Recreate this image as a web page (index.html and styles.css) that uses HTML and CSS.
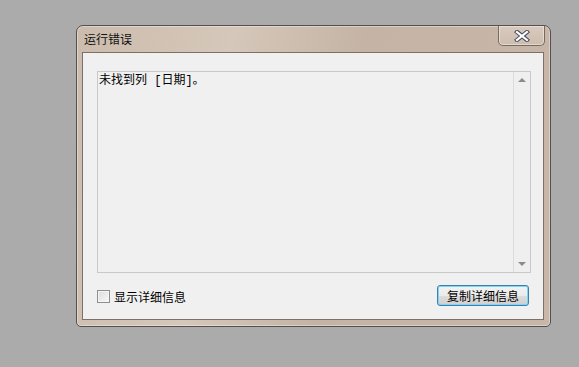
FILE: index.html
```html
<!DOCTYPE html>
<html lang="zh-CN">
<head>
    <meta charset="UTF-8">
    <title>运行错误</title>
    <link rel="stylesheet" href="styles.css">
</head>
<body>
    <div class="window">
        <div class="titlebar">
            <span class="title">运行错误</span>
            <div class="close-btn">
                <svg width="16" height="12" viewBox="0 0 16 12">
                    <path d="M3 2 L13 10 M13 2 L3 10" stroke="#4a4f60" stroke-width="4.2" stroke-linecap="square"/>
                    <path d="M3 2 L13 10 M13 2 L3 10" stroke="#fff" stroke-width="2.2" stroke-linecap="square"/>
                </svg>
            </div>
        </div>

        <div class="client">
            <!-- 错误信息 -->
            <div class="message-box">
                <div class="message-text">未找到列 [日期]。</div>
                <div class="scrollbar">
                    <span class="arrow up"></span>
                    <span class="arrow down"></span>
                </div>
            </div>

            <div class="footer">
                <label class="check">
                    <span class="check-box"></span>
                    显示详细信息
                </label>
                <button class="copy-btn">复制详细信息</button>
            </div>
        </div>
    </div>
</body>
</html>
```

FILE: styles.css
```css
body {
    margin: 0;
    padding: 25px 0 0 76px;
    background-color: #ababab;
    font-family: "Noto Sans CJK SC", "Liberation Sans", sans-serif;
    font-size: 12px;
    color: #000;
}
.window {
    width: 475px;
    height: 302px;
    box-sizing: border-box;
    border: 1px solid #55504b;
    border-radius: 7px 7px 5px 5px;
    background: linear-gradient(100deg, #ccbcad 0%, #d5c7b9 30%, #c5b4a5 55%, #c8b7a8 100%);
    box-shadow: inset 0 0 0 1px rgba(255,255,255,0.35);
    padding: 0 6px 6px 5px;
    display: flex;
    flex-direction: column;
}
.titlebar {
    height: 26px;
    display: flex;
    justify-content: space-between;
    align-items: flex-start;
}
.title {
    line-height: 26px;
    padding-left: 2px;
    color: #111;
}
.close-btn {
    width: 45px;
    height: 19px;
    margin-right: -1px;
    border: 1px solid #746b63;
    border-top: none;
    border-radius: 0 0 5px 5px;
    background: linear-gradient(#d8cabd, #cdbdaf);
    box-shadow: inset 0 0 0 1px rgba(255,255,255,0.4);
    display: flex;
    align-items: center;
    justify-content: center;
}
.client {
    flex: 1;
    border: 1px solid #7a716a;
    background-color: #f0f0f0;
    padding: 18px 12px 12px 14px;
    display: flex;
    flex-direction: column;
}
.message-box {
    height: 202px;
    box-sizing: border-box;
    border: 1px solid #c9c9c9;
    background-color: #f0f0f0;
    display: flex;
}
.message-text {
    flex: 1;
    padding: 1px 1px;
    line-height: 16px;
    font-family: "Liberation Mono", "Noto Sans CJK SC", monospace;
}
.scrollbar {
    width: 16px;
    border-left: 1px solid #dcdcdc;
    background: #efefef;
    display: flex;
    flex-direction: column;
    justify-content: space-between;
    align-items: center;
    padding: 6px 0;
}
.arrow {
    width: 0;
    height: 0;
    border-left: 4px solid transparent;
    border-right: 4px solid transparent;
}
.arrow.up {
    border-bottom: 4px solid #8a8a8a;
}
.arrow.down {
    border-top: 4px solid #8a8a8a;
}
.footer {
    margin-top: 12px;
    display: flex;
    justify-content: space-between;
    align-items: center;
}
.check {
    display: flex;
    align-items: center;
    gap: 4px;
    margin-top: 1px;
}
.check-box {
    width: 11px;
    height: 11px;
    border: 1px solid #8e8f8f;
    background: linear-gradient(135deg, #dcdcdc, #f8f8f8);
    box-shadow: inset 0 0 0 1px #f4f4f4;
}
.copy-btn {
    width: 92px;
    height: 21px;
    margin-right: 2px;
    padding: 0;
    font-family: inherit;
    font-size: 12px;
    color: #000;
    border: 1px solid #3c7fb1;
    border-radius: 3px;
    background: linear-gradient(#f2f2f2 0%, #ebebeb 50%, #dddddd 51%, #cfcfcf 100%);
    box-shadow: inset 0 0 0 1px #7ed6f5;
}
```
